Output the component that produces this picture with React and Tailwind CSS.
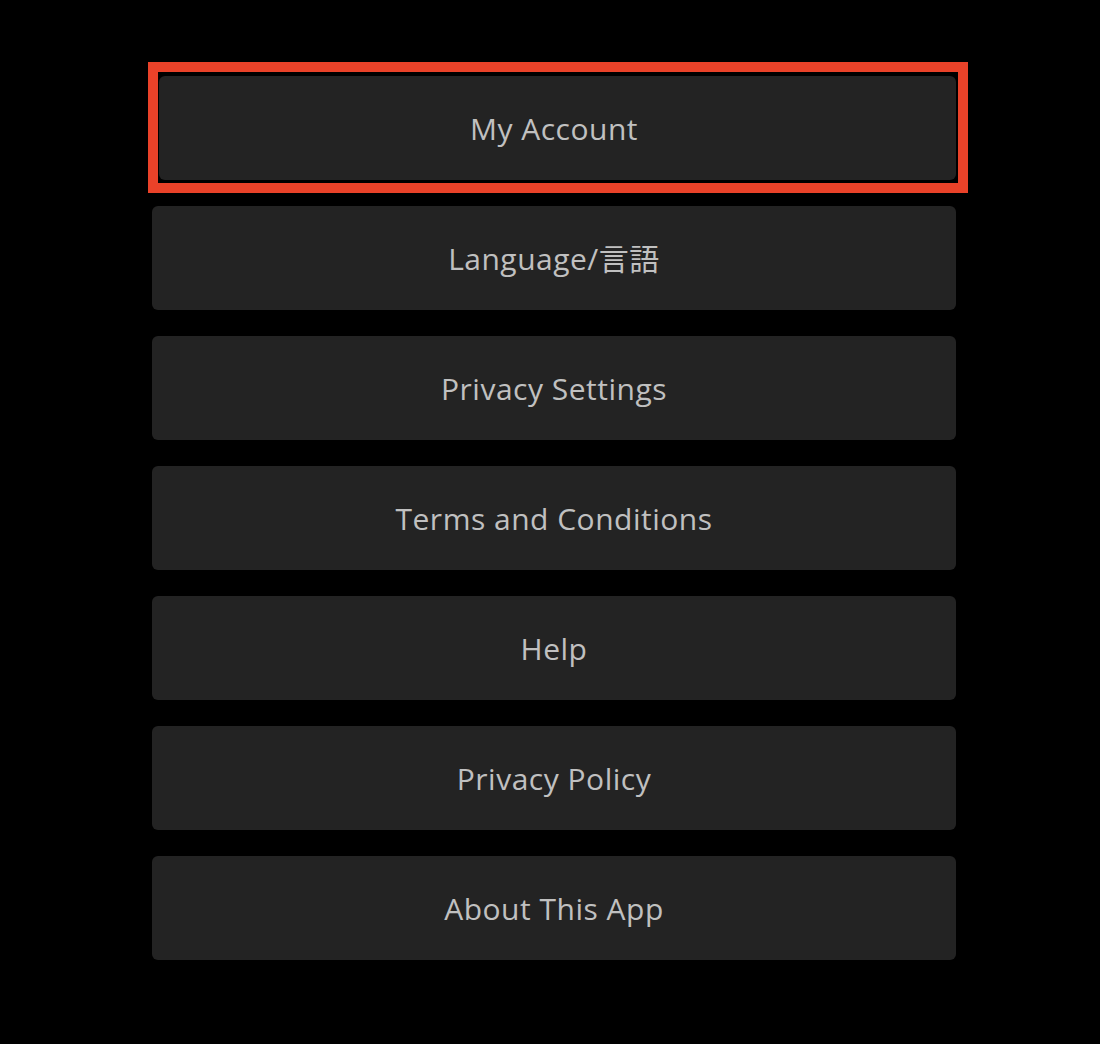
const items = [
  "Language/言語",
  "Privacy Settings",
  "Terms and Conditions",
  "Help",
  "Privacy Policy",
  "About This App",
];

export default function App() {
  return (
    <div
      className="min-h-[1044px] bg-black pl-[152px] pt-[76px]"
      style={{ fontFamily: '"Open Sans", "Noto Sans CJK JP", sans-serif' }}
    >
      <div className="flex w-[804px] flex-col gap-[26px]">
        {/* focused row */}
        <div className="relative h-[104px]">
          <div className="pointer-events-none absolute left-[-4px] top-[-14px] h-[131px] w-[820px] border-[10px] border-[#ea4229]" />
          <button className="ml-[7px] flex h-[104px] w-[797px] items-center justify-center rounded-[6px] bg-[#232323] pr-[7px] text-[30px] tracking-[0.5px] text-[#c0c0c0]">
            My Account
          </button>
        </div>
        {items.map((label) => (
          <button
            key={label}
            className="flex h-[104px] w-[804px] items-center justify-center rounded-[6px] bg-[#232323] text-[30px] tracking-[0.5px] text-[#c0c0c0]"
          >
            {label}
          </button>
        ))}
      </div>
    </div>
  );
}
